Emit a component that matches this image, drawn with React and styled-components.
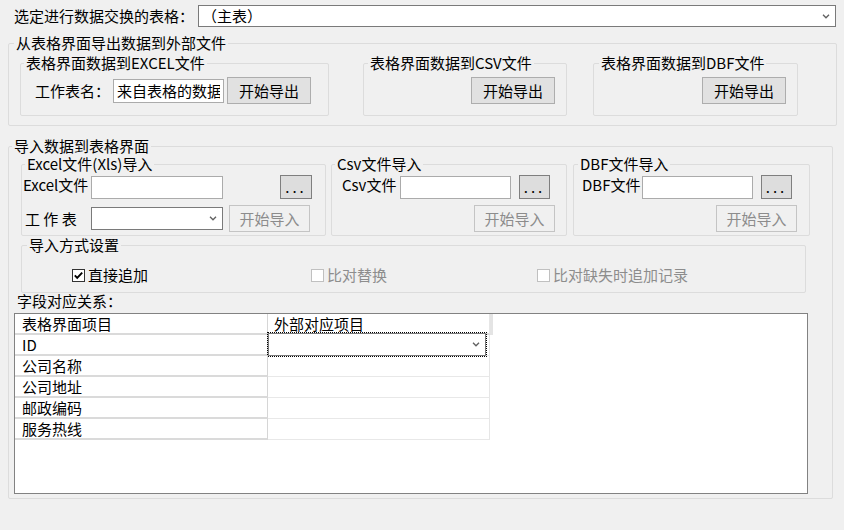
import React from 'react'
import styled, { createGlobalStyle } from 'styled-components'

const GlobalStyle = createGlobalStyle`
  * { box-sizing: border-box; }
  body {
    margin: 0;
    background: #f0f0f0;
    font-family: "Noto Sans CJK SC", "Noto Sans", sans-serif;
    font-size: 15px;
    line-height: 16px;
    color: #000;
  }
`

const Window = styled.div`
  width: 844px;
  height: 530px;
  overflow: hidden;
  padding: 5px 0 0 8px;
`

const TopRow = styled.div`
  display: flex;
  align-items: center;
  height: 22px;
  padding-left: 6px;
`

const Prompt = styled.span`
  width: 184px;
  white-space: nowrap;
`

const Combo = styled.div`
  display: flex;
  align-items: center;
  justify-content: space-between;
  width: ${p => p.w}px;
  height: ${p => p.h || 23}px;
  padding: 0 5px 0 ${p => p.pad || 3}px;
  border: 1px solid #7a7a7a;
  background: #fff;
  white-space: nowrap;
`

const Group = styled.fieldset`
  width: ${p => p.w}px;
  margin: ${p => p.mt || 0}px 0 0 ${p => p.ml || 0}px;
  padding: 0;
  min-width: 0;
  border: 1px solid #dcdcdc;
  border-radius: 2px;
`

const Legend = styled.legend`
  margin-left: ${p => p.ml}px;
  padding: 0 2px;
  line-height: 16px;
  white-space: nowrap;
`

const GroupRow = styled.div`
  display: flex;
  align-items: flex-start;
  margin-top: ${p => p.mt || 0}px;
  padding-bottom: ${p => p.pb || 0}px;
`

const ExportBody = styled.div`
  display: flex;
  align-items: center;
  justify-content: ${p => (p.end ? 'flex-end' : 'flex-start')};
  padding: 6px 11px 11px 14px;
`

const ImportBody = styled.div`
  display: flex;
  flex-direction: column;
  gap: 6px;
  padding: 3px 0 3px 0;
`

const MethodBody = styled.div`
  padding: 14px 0 9px 0;
`

const FieldRow = styled.div`
  display: flex;
  align-items: center;
  height: ${p => p.h}px;
`

const FieldLabel = styled.span`
  width: ${p => p.w}px;
  padding-left: ${p => p.pl || 0}px;
  margin-bottom: ${p => (p.raise ? 5 : 0)}px;
  white-space: nowrap;
`

const TextBox = styled.input`
  width: ${p => p.w}px;
  height: ${p => p.h || 23}px;
  padding: 0 3px;
  border: 1px solid #ababab;
  background: #fff;
  font: inherit;
  color: #000;
  outline: none;
`

const Button = styled.button`
  width: ${p => p.w}px;
  height: ${p => p.h || 27}px;
  margin-left: ${p => p.ml || 0}px;
  padding: 0;
  font: inherit;
  line-height: 16px;
  letter-spacing: ${p => (p.dots ? '3px' : '0')};
  color: ${p => (p.disabled ? '#8c8c8c' : '#000')};
  background: ${p => (p.disabled ? '#f0f0f0' : p.dots ? '#dddddd' : '#e1e1e1')};
  border: 1px solid ${p => (p.disabled ? '#c4c4c4' : p.dots ? '#7f7f7f' : '#adadad')};
`

const CheckRow = styled.div`
  display: flex;
  align-items: center;
  height: 16px;
  padding-left: 50px;
`

const Check = styled.label`
  display: flex;
  align-items: center;
  gap: 3px;
  width: ${p => (p.w ? `${p.w}px` : 'auto')};
  color: ${p => (p.disabled ? '#8d8d8d' : '#000')};
  white-space: nowrap;
`

const Caption = styled.div`
  margin-left: 8px;
  height: 16px;
`

const GridWrap = styled.div`
  padding-bottom: 4px;
`

const GridBox = styled.div`
  width: 794px;
  height: 181px;
  margin: 4px 0 0 5px;
  border: 1px solid #828282;
  background: #fff;
`

const Table = styled.div`
  display: grid;
  grid-template-columns: 253px 222px 3px;
  grid-auto-rows: 21px;
`

const Cell = styled.div`
  display: flex;
  align-items: center;
  padding-left: ${p => (p.first ? 7 : 6)}px;
  border-right: 1px solid ${p => (p.first ? '#d6d6d6' : '#e6e6e6')};
  border-bottom: ${p => (p.first || p.head ? '2px solid #dadada' : '1px solid #e8e8e8')};
  white-space: nowrap;
  overflow: visible;
`

const Sliver = styled.div`
  background: ${p => (p.head ? '#e4e4e4' : 'transparent')};
`

const FocusFrame = styled.div`
  margin: -2px 0 0 -6px;
  outline: 1px dotted #000;
`

const Chevron = () => (
  <svg width="8" height="5" viewBox="0 0 8 5">
    <path d="M1 0.8 L4 3.8 L7 0.8" fill="none" stroke="#606060" strokeWidth="1.3" />
  </svg>
)

const Box = ({ checked, disabled }) => (
  <svg width="13" height="13" viewBox="0 0 13 13">
    <rect x="0.5" y="0.5" width="12" height="12" fill="#fff" stroke={disabled ? '#c0c0c0' : '#333'} />
    {checked && <path d="M2.8 6.4 L5.2 8.9 L10.2 3.6" fill="none" stroke="#000" strokeWidth="1.9" />}
  </svg>
)

const fields = ['ID', '公司名称', '公司地址', '邮政编码', '服务热线']

const App = () => {
  return (
    <>
      <GlobalStyle />
      <Window>
        <TopRow>
          <Prompt>选定进行数据交换的表格：</Prompt>
          <Combo w={638} h={22}>
            <span>（主表）</span>
            <Chevron />
          </Combo>
        </TopRow>

        <Group w={829} mt={8}>
          <Legend ml={5}>从表格界面导出数据到外部文件</Legend>
          <GroupRow pb={9}>
            <Group w={309} mt={4} ml={11}>
              <Legend ml={3}>表格界面数据到EXCEL文件</Legend>
              <ExportBody>
                <FieldLabel w={78}>工作表名：</FieldLabel>
                <TextBox w={111} h={24} defaultValue="来自表格的数据" readOnly />
                <Button w={84} ml={3}>开始导出</Button>
              </ExportBody>
            </Group>
            <Group w={204} mt={4} ml={34}>
              <Legend ml={4}>表格界面数据到CSV文件</Legend>
              <ExportBody end>
                <Button w={84}>开始导出</Button>
              </ExportBody>
            </Group>
            <Group w={205} mt={4} ml={26}>
              <Legend ml={5}>表格界面数据到DBF文件</Legend>
              <ExportBody end>
                <Button w={84}>开始导出</Button>
              </ExportBody>
            </Group>
          </GroupRow>
        </Group>

        <Group w={825} mt={12}>
          <Legend ml={3}>导入数据到表格界面</Legend>
          <GroupRow mt={2}>
            <Group w={305} ml={12}>
              <Legend ml={3}>Excel文件(Xls)导入</Legend>
              <ImportBody>
                <FieldRow h={24}>
                  <FieldLabel w={69} pl={1} raise>Excel文件</FieldLabel>
                  <TextBox w={132} readOnly />
                  <Button w={32} h={24} ml={57} dots>...</Button>
                </FieldRow>
                <FieldRow h={27}>
                  <FieldLabel w={69} pl={3}>工 作 表</FieldLabel>
                  <Combo w={132}>
                    <span />
                    <Chevron />
                  </Combo>
                  <Button w={81} ml={6} disabled>开始导入</Button>
                </FieldRow>
              </ImportBody>
            </Group>
            <Group w={236} ml={5}>
              <Legend ml={3}>Csv文件导入</Legend>
              <ImportBody>
                <FieldRow h={24}>
                  <FieldLabel w={68} pl={10} raise>Csv文件</FieldLabel>
                  <TextBox w={111} readOnly />
                  <Button w={31} h={24} ml={8} dots>...</Button>
                </FieldRow>
                <FieldRow h={27}>
                  <Button w={81} ml={142} disabled>开始导入</Button>
                </FieldRow>
              </ImportBody>
            </Group>
            <Group w={237} ml={6}>
              <Legend ml={4}>DBF文件导入</Legend>
              <ImportBody>
                <FieldRow h={24}>
                  <FieldLabel w={68} pl={8} raise>DBF文件</FieldLabel>
                  <TextBox w={111} readOnly />
                  <Button w={31} h={24} ml={8} dots>...</Button>
                </FieldRow>
                <FieldRow h={27}>
                  <Button w={81} ml={142} disabled>开始导入</Button>
                </FieldRow>
              </ImportBody>
            </Group>
          </GroupRow>

          <Group w={785} mt={1} ml={12}>
            <Legend ml={5}>导入方式设置</Legend>
            <MethodBody>
              <CheckRow>
                <Check w={239}><Box checked />直接追加</Check>
                <Check w={226} disabled><Box disabled />比对替换</Check>
                <Check disabled><Box disabled />比对缺失时追加记录</Check>
              </CheckRow>
            </MethodBody>
          </Group>

          <Caption>字段对应关系：</Caption>
          <GridWrap>
            <GridBox>
              <Table>
                <Cell first head>表格界面项目</Cell>
                <Cell head>外部对应项目</Cell>
                <Sliver head />
                {fields.map((f, i) => (
                  <React.Fragment key={f}>
                    <Cell first>{f}</Cell>
                    <Cell>
                      {i === 0 && (
                        <FocusFrame>
                          <Combo w={218}>
                            <span />
                            <Chevron />
                          </Combo>
                        </FocusFrame>
                      )}
                    </Cell>
                    <Sliver />
                  </React.Fragment>
                ))}
              </Table>
            </GridBox>
          </GridWrap>
        </Group>
      </Window>
    </>
  )
}

export default App
